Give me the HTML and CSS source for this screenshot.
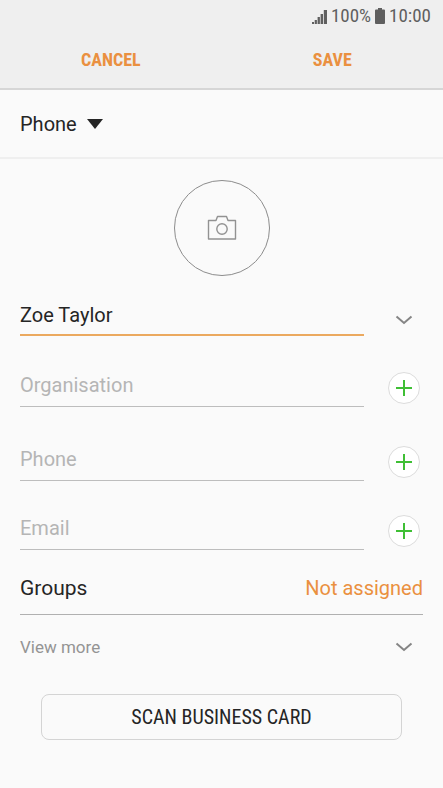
FILE: index.html
```html
<!DOCTYPE html>
<html lang="en">
<head>
<meta charset="utf-8">
<meta name="viewport" content="width=device-width, initial-scale=1">
<title>Create contact</title>
<link rel="stylesheet" href="styles.css">
</head>
<body>
<header class="top">
  <div class="status">
    <svg class="signal" width="15" height="15" viewBox="0 0 15 15" aria-hidden="true"><path d="M0 13h2v2H0zM2.700 11h2.200v4H2.700zM5.600 8h2.300v7H5.600zM8.600 5h2.400v10H8.600zM11.800 1H15v14h-3.200z"/></svg>
    <span>100%</span>
    <svg class="battery" width="10" height="16" viewBox="0 0 10 16" aria-hidden="true"><path d="M3 0h4v1.500h2a1 1 0 0 1 1 1V15a1 1 0 0 1-1 1H1a1 1 0 0 1-1-1V2.500a1 1 0 0 1 1-1h2z"/></svg>
    <span>10:00</span>
  </div>
  <nav class="actions">
    <button type="button" class="action">CANCEL</button>
    <button type="button" class="action">SAVE</button>
  </nav>
</header>
<main>
  <div class="storage">
    <button type="button" class="storage-button">Phone
      <svg width="16" height="10" viewBox="0 0 16 10" aria-hidden="true"><path d="M0 0h16L8 10z"/></svg>
    </button>
  </div>
  <button type="button" class="photo" aria-label="Add photo">
    <svg width="30" height="26" viewBox="0 0 30 26" aria-hidden="true"><path d="M1.500 5.500h7.500l1.500-4h9l1.500 4h7.500v18.500h-27z"/><circle cx="15" cy="14" r="5.200"/></svg>
  </button>
  <form class="fields">
    <div class="field">
      <input class="text active" type="text" aria-label="Name" value="Zoe Taylor">
      <button type="button" class="expand" aria-label="Expand name"><svg width="18" height="10" viewBox="0 0 18 10" aria-hidden="true"><path d="M1.500 1.500L9 8l7.500-6.500"/></svg></button>
    </div>
    <div class="field">
      <input class="text" type="text" aria-label="Organisation" placeholder="Organisation">
      <button type="button" class="add" aria-label="Add organisation"><svg width="16" height="16" viewBox="0 0 16 16" aria-hidden="true"><path d="M8 0v16M0 8h16"/></svg></button>
    </div>
    <div class="field">
      <input class="text" type="tel" aria-label="Phone" placeholder="Phone">
      <button type="button" class="add" aria-label="Add phone"><svg width="16" height="16" viewBox="0 0 16 16" aria-hidden="true"><path d="M8 0v16M0 8h16"/></svg></button>
    </div>
    <div class="field">
      <input class="text" type="email" aria-label="Email" placeholder="Email">
      <button type="button" class="add" aria-label="Add email"><svg width="16" height="16" viewBox="0 0 16 16" aria-hidden="true"><path d="M8 0v16M0 8h16"/></svg></button>
    </div>
    <button type="button" class="groups"><span class="label">Groups</span><span class="value">Not assigned</span></button>
    <button type="button" class="more"><span>View more</span><span class="expand"><svg width="18" height="10" viewBox="0 0 18 10" aria-hidden="true"><path d="M1.500 1.500L9 8l7.500-6.500"/></svg></span></button>
  </form>
  <button type="button" class="scan">SCAN BUSINESS CARD</button>
</main>
</body>
</html>
```
FILE: styles.css
```css
* {
  box-sizing: border-box;
}

body {
  margin: 0;
  background: #fafafa;
  color: #252525;
  font-family: Roboto, "Liberation Sans", sans-serif;
  font-size: 20px;
  line-height: 24px;
}

button,
input {
  margin: 0;
  padding: 0;
  border: 0;
  border-radius: 0;
  outline: 0;
  background: none;
  color: inherit;
  font: inherit;
}

svg {
  display: block;
}

.top {
  background: #efefef;
  border-bottom: 2px solid #d6d6d6;
}

.status {
  display: flex;
  align-items: center;
  justify-content: flex-end;
  gap: 4px;
  height: 32px;
  padding: 0 12px 0 0;
  color: #5f5f5f;
  font-family: "Roboto Condensed", Roboto, sans-serif;
  font-size: 19px;
}

.signal,
.battery {
  fill: #5f5f5f;
}

.actions {
  display: grid;
  grid-template-columns: 1fr 1fr;
  height: 56px;
}

.action {
  color: #ea9040;
  font-family: "Roboto Condensed", Roboto, sans-serif;
  font-size: 18px;
  font-weight: 700;
}

.storage {
  display: flex;
  height: 69px;
  padding: 0 20px;
  border-bottom: 2px solid #efefef;
}

.storage-button {
  display: flex;
  align-items: center;
  gap: 10px;
}

.storage-button svg {
  fill: #252525;
}

.photo {
  display: grid;
  place-items: center;
  width: 96px;
  height: 96px;
  margin: 21px auto 16px;
  border: 1px solid #8c8c8c;
  border-radius: 50%;
}

.photo svg {
  fill: none;
  stroke: #929292;
  stroke-width: 1.4;
  stroke-linejoin: round;
}

.fields {
  display: grid;
  grid-template-rows: 44px 71px 74px 69px 65px 64px;
  padding: 0 20px;
}

.field {
  display: grid;
  grid-template-columns: 1fr 39px;
  gap: 20px;
  align-items: end;
}

.text {
  width: 100%;
  height: 44px;
  border-bottom: 1px solid #bdbdbd;
}

.text.active {
  padding-top: 3px;
  border-bottom: 2px solid #eba95f;
}

.text::placeholder {
  color: #b5b5b5;
  opacity: 1;
}

.add,
.expand {
  display: grid;
  place-items: center;
  justify-self: center;
  width: 32px;
  height: 32px;
}

.add {
  margin-bottom: 3px;
  border: 1px solid #dcdcdc;
  border-radius: 50%;
  background: #fff;
}

.add svg {
  stroke: #3fbf35;
  stroke-width: 2;
}

.expand svg {
  fill: none;
  stroke: #858585;
  stroke-width: 2;
}

.groups,
.more {
  display: flex;
  align-items: center;
  justify-content: space-between;
}

.groups {
  padding-top: 12px;
  border-bottom: 1px solid #b0b0b0;
}

.label {
  font-size: 21px;
}

.value {
  color: #ea9040;
}

.more {
  padding-right: 3px;
  color: #949494;
  font-size: 17px;
}

.scan {
  display: block;
  width: calc(100% - 82px);
  height: 46px;
  margin: 15px auto 48px;
  border: 1px solid #d4d4d4;
  border-radius: 8px;
  font-family: "Roboto Condensed", Roboto, sans-serif;
}
```
